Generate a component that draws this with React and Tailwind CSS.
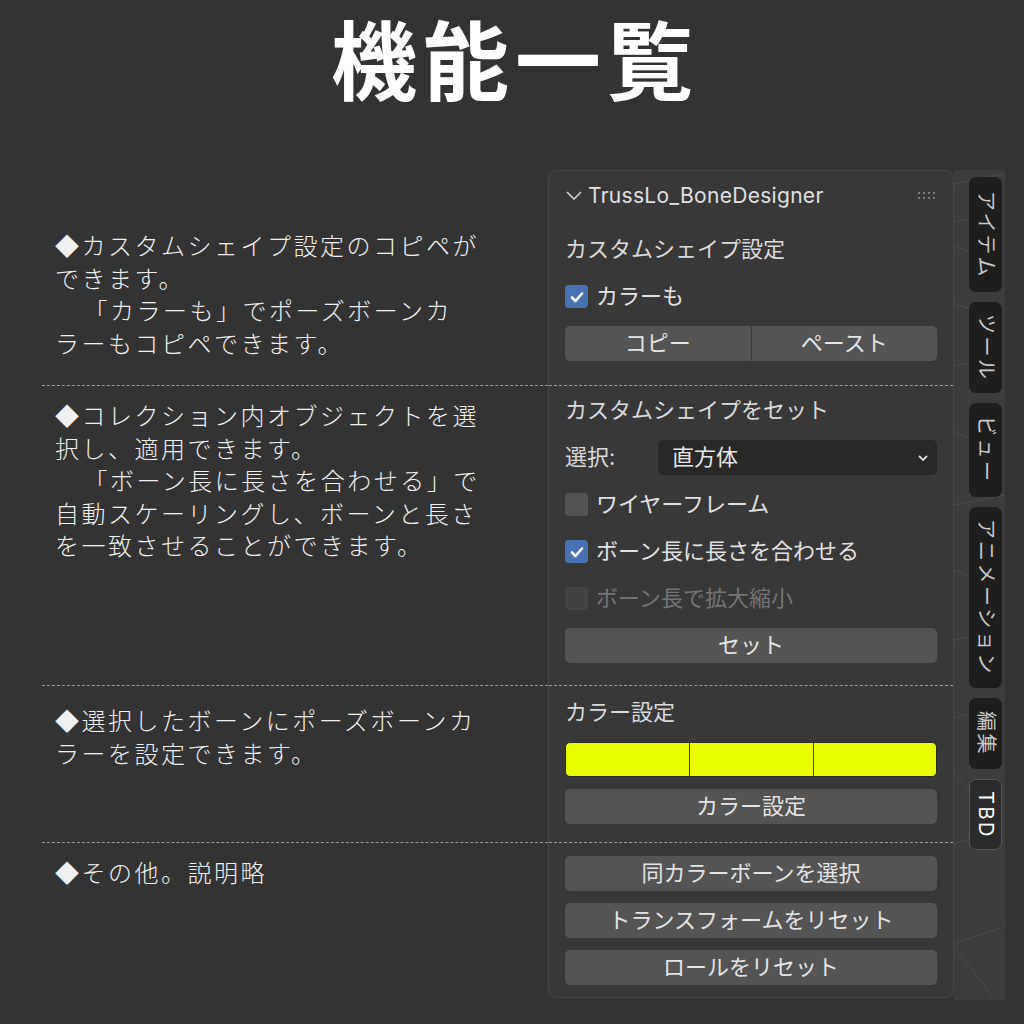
import React from 'react';

const jp = "font-['Inter','Noto_Sans_CJK_JP',sans-serif]";

const Check = ({ state = 'off', label }) => {
  const box =
    state === 'on'
      ? 'bg-[#4772b3]'
      : state === 'disabled'
      ? 'bg-[#434343]'
      : 'bg-[#545454]';
  return (
    <div className="h-[35px] flex items-center gap-[8px]">
      <div className={`w-[23px] h-[23px] rounded-[4px] flex items-center justify-center ${box}`}>
        {state === 'on' && (
          <svg width="16" height="16" viewBox="0 0 16 16">
            <polyline points="3,8.5 6.5,12 13,4.5" fill="none" stroke="#fff" strokeWidth="2.6" strokeLinecap="round" strokeLinejoin="round" />
          </svg>
        )}
      </div>
      <span className={state === 'disabled' ? 'text-[#747474]' : 'text-[#e2e2e2]'}>{label}</span>
    </div>
  );
};

const Button = ({ children }) => (
  <div className="h-[35px] rounded-[5px] bg-[#545454] flex items-center justify-center text-[#e4e4e4]">
    {children}
  </div>
);

const Label = ({ children }) => (
  <div className="h-[35px] flex items-center text-[#dadada]">{children}</div>
);

const Tab = ({ children, active, h }) => (
  <div
    className={`w-[33px] ${h} rounded-[7px] flex items-center justify-center ${
      active ? 'bg-[#2b2b2b] border border-[#555] text-white' : 'bg-[#1e1e1e] text-[#c8c8c8]'
    }`}
  >
    <span className="[writing-mode:vertical-rl] [text-orientation:sideways] text-[20px] leading-none tracking-[2.5px]">
      {children}
    </span>
  </div>
);

// lines starting with a full-width space get a little more indent, as in the source image
const Desc = ({ lines }) => (
  <div className="text-[24px] leading-[32.5px] tracking-[2.5px] font-light text-[#f0f0f0] font-['Noto_Sans_CJK_JP',sans-serif]">
    {lines.map((l, i) =>
      l.startsWith('　') ? (
        <div key={i} className="whitespace-pre pl-[14px]">{l}</div>
      ) : (
        <div key={i} className="whitespace-pre">{l}</div>
      )
    )}
  </div>
);

export default function App() {
  return (
    <div className="w-[1024px] h-[1024px] bg-[#333333] overflow-hidden">
      <header className="h-[170px] pt-[13px]">
        <h1 className="text-center text-[86px] leading-[1.2] font-bold text-white font-['Liberation_Sans','Noto_Sans_CJK_JP',sans-serif]">
          <span className="tracking-[6px] pl-[6px]">機能一覧</span>
        </h1>
      </header>

      <div className="flex pl-[42px]">
        {/* descriptions */}
        <div className="w-[506px]">
          <div className="h-[215px] pt-[59px] pl-[13px]">
            <Desc lines={['◆カスタムシェイプ設定のコピペが', 'できます。', '　「カラーも」でポーズボーンカ', 'ラーもコピペできます。']} />
          </div>
          <div className="h-[300px] border-t border-dashed border-[#9a9a9a] pt-[13px] pl-[13px]">
            <Desc lines={['◆コレクション内オブジェクトを選', '択し、適用できます。', '　「ボーン長に長さを合わせる」で', '自動スケーリングし、ボーンと長さ', 'を一致させることができます。']} />
          </div>
          <div className="h-[157px] border-t border-dashed border-[#9a9a9a] pt-[18px] pl-[13px]">
            <Desc lines={['◆選択したボーンにポーズボーンカ', 'ラーを設定できます。']} />
          </div>
          <div className="border-t border-dashed border-[#9a9a9a] pt-[13px] pl-[13px]">
            <Desc lines={['◆その他。説明略']} />
          </div>
        </div>

        {/* panel */}
        <div className={`w-[406px] h-[828px] rounded-[8px] border border-[#474747] bg-[#383838] text-[22px] ${jp}`}>
          <div className="h-[214px] px-[16px]">
            <div className="h-[49px] flex items-center">
              <svg width="18" height="12" viewBox="0 0 18 12" className="mr-[5px] mt-[-2px]">
                <polyline points="2,3 9,10 16,3" fill="none" stroke="#cfcfcf" strokeWidth="1.6" />
              </svg>
              <span className="text-[21px] tracking-[0.3px] text-[#e0e0e0] font-['Inter',sans-serif]">TrussLo_BoneDesigner</span>
              <div className="ml-auto mr-[2px] grid grid-cols-4 gap-[3px]">
                {Array.from({ length: 8 }).map((_, i) => (
                  <div key={i} className="w-[2px] h-[2px] bg-[#7a7a7a]" />
                ))}
              </div>
            </div>
            <div className="pt-[12px] flex flex-col gap-[12px]">
              <Label>カスタムシェイプ設定</Label>
              <Check state="on" label="カラーも" />
              <div className="h-[35px] flex rounded-[5px] overflow-hidden text-[#e4e4e4]">
                <div className="flex-1 bg-[#545454] flex items-center justify-center border-r border-[#3a3a3a]">コピー</div>
                <div className="flex-1 bg-[#545454] flex items-center justify-center">ペースト</div>
              </div>
            </div>
          </div>

          <div className="h-[300px] border-t border-dashed border-[#9a9a9a] px-[16px] pt-[7px] flex flex-col gap-[12px]">
            <Label>カスタムシェイプをセット</Label>
            <div className="h-[35px] flex items-center">
              <span className="w-[93px] text-[#dadada]">選択:</span>
              <div className="flex-1 h-[35px] rounded-[5px] bg-[#282828] flex items-center pl-[14px] pr-[8px] text-[#e6e6e6]">
                <span>直方体</span>
                <svg width="12" height="10" viewBox="0 0 12 10" className="ml-auto">
                  <polyline points="2,3 6,7 10,3" fill="none" stroke="#d8d8d8" strokeWidth="1.8" />
                </svg>
              </div>
            </div>
            <Check label="ワイヤーフレーム" />
            <Check state="on" label="ボーン長に長さを合わせる" />
            <Check state="disabled" label="ボーン長で拡大縮小" />
            <Button>セット</Button>
          </div>

          <div className="h-[157px] border-t border-dashed border-[#9a9a9a] px-[16px] pt-[9px] flex flex-col gap-[12px]">
            <Label>カラー設定</Label>
            <div className="h-[35px] grid grid-cols-3 rounded-[5px] border border-[#2a2a2a] bg-[#eaff00] overflow-hidden">
              <div />
              <div className="border-l border-[#3a3a3a]" />
              <div className="border-l border-[#3a3a3a]" />
            </div>
            <Button>カラー設定</Button>
          </div>

          <div className="border-t border-dashed border-[#9a9a9a] px-[16px] pt-[13px] flex flex-col gap-[12px]">
            <Button>同カラーボーンを選択</Button>
            <Button>トランスフォームをリセット</Button>
            <Button>ロールをリセット</Button>
          </div>
        </div>

        {/* side tabs */}
        <div className={`relative w-[51px] h-[830px] bg-[#3c3c3c] ${jp}`}>
          <svg className="absolute inset-0" width="51" height="830" viewBox="0 0 51 830">
            <g stroke="#4b4b4b" strokeWidth="1">
              <line x1="0" y1="14" x2="51" y2="4" />
              <line x1="0" y1="52" x2="51" y2="42" />
              <line x1="0" y1="76" x2="51" y2="96" />
              <line x1="0" y1="133" x2="51" y2="153" />
              <line x1="0" y1="196" x2="51" y2="186" />
              <line x1="0" y1="262" x2="51" y2="282" />
              <line x1="0" y1="335" x2="51" y2="325" />
              <line x1="0" y1="400" x2="51" y2="420" />
              <line x1="0" y1="470" x2="51" y2="460" />
              <line x1="0" y1="548" x2="51" y2="535" />
              <line x1="0" y1="605" x2="51" y2="650" />
              <line x1="0" y1="674" x2="51" y2="658" />
              <line x1="0" y1="773" x2="51" y2="757" />
              <line x1="0" y1="777" x2="40" y2="828" />
            </g>
          </svg>
          <div className="relative flex flex-col gap-[10px] pt-[7px] pl-[15px]">
            <Tab h="h-[115px]">アイテム</Tab>
            <Tab h="h-[91px]">ツール</Tab>
            <Tab h="h-[94px]">ビュー</Tab>
            <Tab h="h-[181px]">アニメーション</Tab>
            <Tab h="h-[71px]">編集</Tab>
            <Tab h="h-[71px]" active>
              TBD
            </Tab>
          </div>
        </div>
      </div>
    </div>
  );
}
